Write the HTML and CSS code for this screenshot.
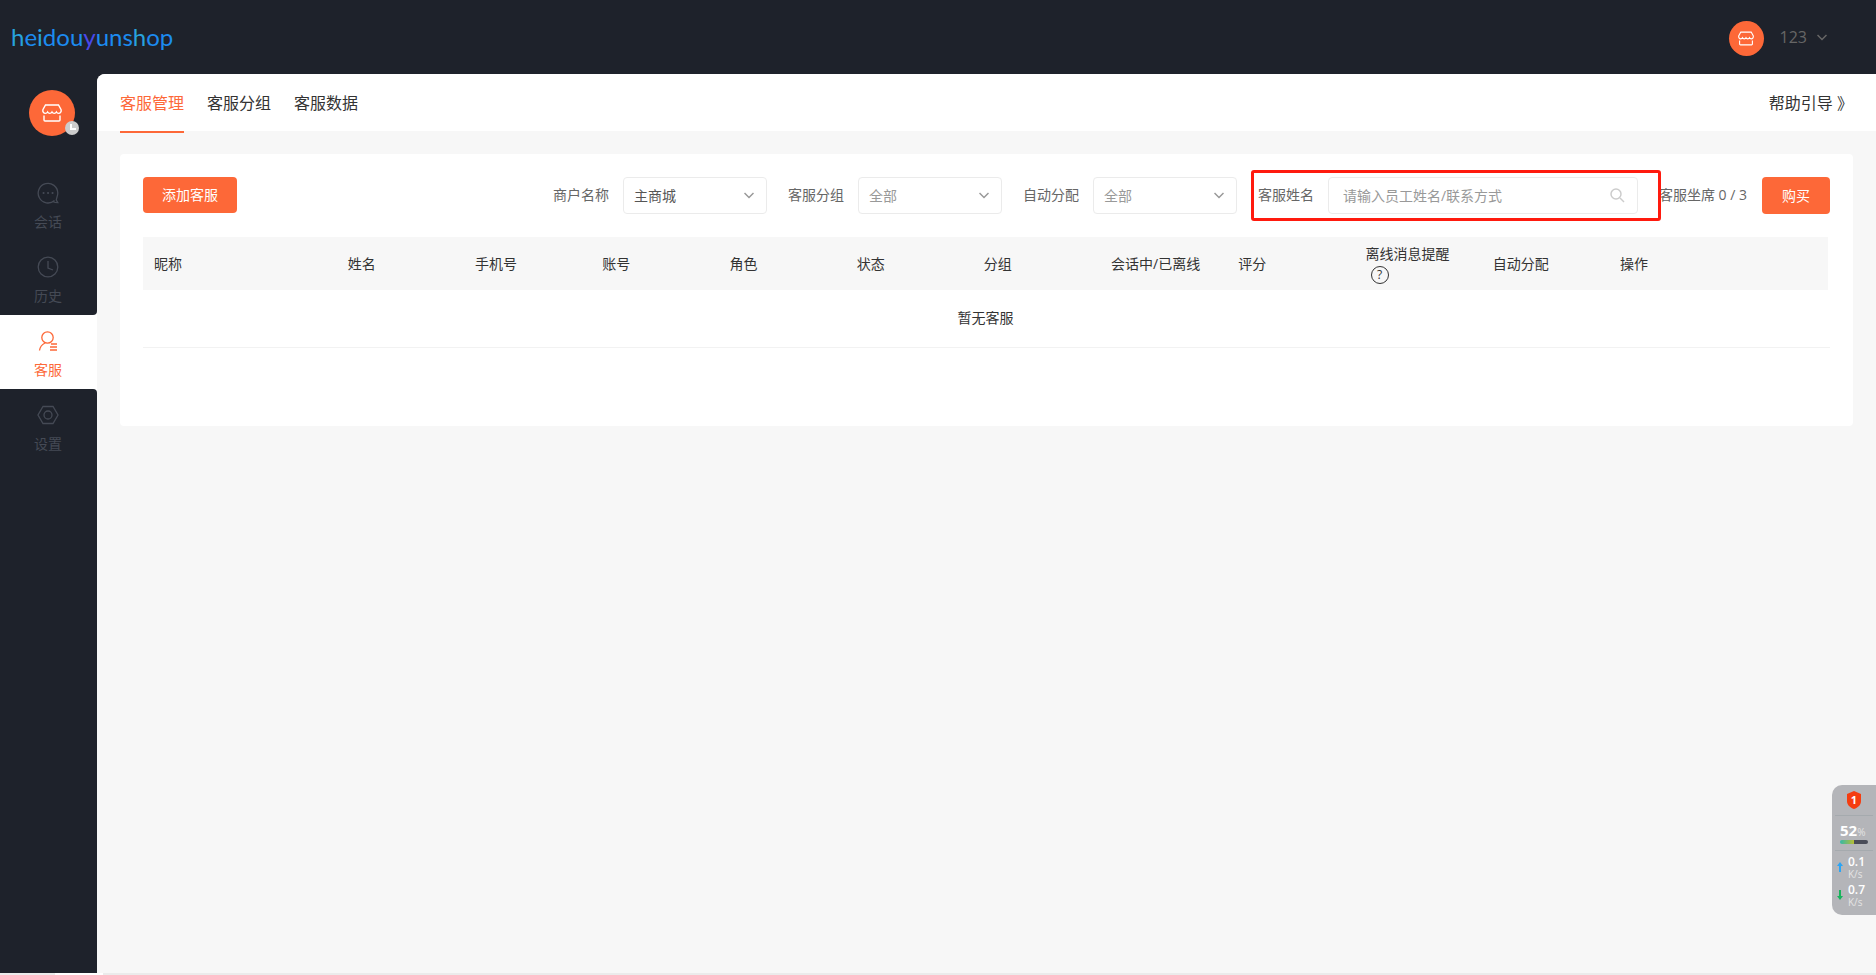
FILE: index.html
```html
<!DOCTYPE html>
<html lang="zh-CN">
<head>
    <meta charset="utf-8" />
    <title>客服管理</title>
    <meta name="viewport" content="width=device-width, initial-scale=1" />
    <link rel="stylesheet" href="styles.css">
</head>
<body>
<svg class="sprite" aria-hidden="true">
    <symbol id="shop" viewBox="0 0 20 18">
        <path d="M3.5 1h13L19 5.500c.6 2-.5 3.900-2.400 3.900-1.500 0-2.200-1.400-2.200-1.400s-.7 1.400-2.200 1.400S10 8 10 8s-.7 1.400-2.200 1.400S5.600 8 5.600 8s-.7 1.400-2.200 1.400C1.500 9.400.4 7.500 1 5.500zM2 11.500V16q0 1 1 1h14q1 0 1-1v-4.500" />
    </symbol>
    <symbol id="chevron" viewBox="0 0 10 7">
        <path d="M0.500 1l4.500 4.500L9.500 1" />
    </symbol>
</svg>

<header class="header">
    <a class="logo" href="#"><span class="c1">h</span>e<span class="c1">i</span>dou<span class="c2">y</span>uns<span class="c1">h</span>op</a>
    <button class="user" type="button">
        <span class="avatar"><svg width="16" height="15"><use href="#shop" /></svg></span>
        <span>123</span>
        <svg class="chevron" width="10" height="7"><use href="#chevron" /></svg>
    </button>
</header>

<div class="layout">
    <nav class="sidebar">
        <div class="side-top">
            <div class="store">
                <svg width="20" height="18"><use href="#shop" /></svg>
                <span class="store-status">
                    <svg width="14" height="14" viewBox="0 0 14 14"><path d="M6 3v5h5" /></svg>
                </span>
            </div>
            <a class="side-item" href="#">
                <svg width="22" height="22" viewBox="0 0 22 22">
                    <path d="M17.500 18.500A9.800 9.800 0 1 1 20.800 11c0 3-1.500 5.500-1.500 7l1.500 2.700c-1.500 0-3 0-4.500-1" />
                    <path class="dots" d="M6.500 11h.1M11 11h.1M15.500 11h.1" />
                </svg>
                会话
            </a>
            <a class="side-item" href="#">
                <svg width="22" height="22" viewBox="0 0 22 22">
                    <circle cx="11" cy="11" r="9.800" />
                    <path d="M11 5v7l5 2" />
                </svg>
                历史
            </a>
        </div>
        <a class="side-item active" href="#">
            <svg width="22" height="22" viewBox="0 0 22 22">
                <circle cx="10.500" cy="7.500" r="5.700" />
                <path d="M2.500 20.500c.5-3.500 2.500-6 5.500-7.500M14 14h6M13 17h7M13 20h7" />
            </svg>
            客服
        </a>
        <div class="side-rest">
            <a class="side-item" href="#">
                <svg width="22" height="22" viewBox="0 0 22 22">
                    <path d="M6 2.500h10l5 8.500-5 8.500H6L1 11z" />
                    <circle cx="11" cy="11" r="4" />
                </svg>
                设置
            </a>
        </div>
    </nav>

    <main class="main">
        <div class="tabs">
            <a class="tab current" href="#">客服管理</a>
            <a class="tab" href="#">客服分组</a>
            <a class="tab" href="#">客服数据</a>
            <a class="guide" href="#">帮助引导 》</a>
        </div>

        <section class="card">
            <form class="toolbar">
                <button class="btn" type="button">添加客服</button>
                <div class="filters">
                    <div class="field">
                        <label for="shop-name">商户名称</label>
                        <div class="control">
                            <select id="shop-name" class="chosen"><option>主商城</option></select>
                            <svg class="chevron" width="10" height="7"><use href="#chevron" /></svg>
                        </div>
                    </div>
                    <div class="field">
                        <label for="group">客服分组</label>
                        <div class="control">
                            <select id="group"><option>全部</option></select>
                            <svg class="chevron" width="10" height="7"><use href="#chevron" /></svg>
                        </div>
                    </div>
                    <div class="field">
                        <label for="assign">自动分配</label>
                        <div class="control">
                            <select id="assign"><option>全部</option></select>
                            <svg class="chevron" width="10" height="7"><use href="#chevron" /></svg>
                        </div>
                    </div>
                    <div class="field marked">
                        <label for="staff">客服姓名</label>
                        <div class="control search">
                            <input id="staff" type="text" placeholder="请输入员工姓名/联系方式" />
                            <svg width="15" height="15" viewBox="0 0 15 15"><circle cx="6" cy="6" r="5" /><path d="M10 10l4 4" /></svg>
                        </div>
                    </div>
                    <div class="field seats">
                        <span>客服坐席 0 / 3</span>
                        <button class="btn buy" type="button">购买</button>
                    </div>
                </div>
            </form>

            <div class="table-wrap">
                <table>
                    <thead>
                        <tr>
                            <th class="col-nick">昵称</th>
                            <th>姓名</th>
                            <th>手机号</th>
                            <th>账号</th>
                            <th>角色</th>
                            <th>状态</th>
                            <th>分组</th>
                            <th>会话中/已离线</th>
                            <th>评分</th>
                            <th>离线消息提醒 <button class="help" type="button" aria-label="说明">?</button></th>
                            <th>自动分配</th>
                            <th class="col-action">操作</th>
                        </tr>
                    </thead>
                    <tbody>
                        <tr><td colspan="12">暂无客服</td></tr>
                    </tbody>
                </table>
            </div>
        </section>
    </main>
</div>
<div class="bottom-line"></div>

<aside class="monitor">
    <svg class="shield" width="14" height="18" viewBox="0 0 14 18">
        <path d="M7 0l7 3v7c0 4-3 6.500-7 8-4-1.500-7-4-7-8V3z" />
        <text x="7" y="13" text-anchor="middle">1</text>
    </svg>
    <div class="memory">
        <div><b>52</b>%</div>
        <div class="bar"></div>
    </div>
    <div class="speed up">
        <svg width="6" height="10" viewBox="0 0 6 10"><path d="M3 0l3 4H4v6H2V4H0z" /></svg>
        <div>0.1<small>K/s</small></div>
    </div>
    <div class="speed down">
        <svg width="6" height="10" viewBox="0 0 6 10"><path d="M3 10l3-4H4V0H2v6H0z" /></svg>
        <div>0.7<small>K/s</small></div>
    </div>
</aside>
</body>
</html>
```

FILE: styles.css
```css
* { box-sizing: border-box; }
body {
    margin: 0; min-height: 100vh; display: flex; flex-direction: column;
    background: #1e222b; color: #333;
    font: 14px/20px "Open Sans", "Noto Sans CJK SC", sans-serif;
}
a { color: inherit; text-decoration: none; }
button, input, select { font: inherit; color: inherit; }
button { border: 0; padding: 0; background: none; cursor: pointer; }
svg { fill: none; stroke: currentColor; flex: none; }
.sprite { position: absolute; width: 0; height: 0; }
.chevron { color: #999; stroke-width: 1.5; }

/* header */
.header {
    height: 74px; padding: 0 49px 0 11px;
    display: flex; align-items: center; justify-content: space-between;
}
.logo { font: 24px/30px Lato, sans-serif; color: #1c8bf0; }
.logo .c1 { color: #28a3dc; }
.logo .c2 { color: #4b49ea; }
.user {
    display: flex; align-items: center; gap: 10px;
    font-size: 16px; color: #666;
}
.user .chevron { color: #666; }
.avatar {
    width: 35px; height: 35px; margin: 3px 6px 0 0; border-radius: 50%;
    display: flex; align-items: center; justify-content: center;
    background: #fd6838; color: #fff;
}
.avatar svg, .store > svg { stroke-width: 1.4; }

/* sidebar */
.layout { flex: 1; display: flex; }
.sidebar { width: 97px; display: flex; flex-direction: column; background: #fff; }
.side-top, .side-rest { background: #1e222b; color: #454a55; }
.side-top { border-bottom-right-radius: 4px; }
.side-rest { flex: 1; border-top-right-radius: 4px; }
.store {
    position: relative; width: 46px; height: 46px; margin: 16px 0 31px 29px;
    border-radius: 50%; background: #fd6838; color: #fff;
    display: flex; align-items: center; justify-content: center;
}
.store-status {
    position: absolute; right: -4px; bottom: 1px; width: 14px; height: 14px;
    border-radius: 50%; background: #ccc;
}
.store-status svg { display: block; stroke-width: 2; }
.side-item {
    height: 74px; padding: 15px 1px 0 0;
    display: flex; flex-direction: column; align-items: center; gap: 8px;
}
.side-item.active { color: #fd6838; }
.side-item svg { stroke-width: 1.3; }
.side-item .dots { stroke-width: 2; stroke-linecap: round; }

/* main area */
.main {
    flex: 1; min-width: 0; background: #f7f7f7;
    border-top-left-radius: 8px; overflow: hidden;
}
.tabs {
    height: 57px; padding: 0 23px; display: flex; gap: 23px;
    background: #fff; font-size: 16px; line-height: 58px;
}
.tab.current { height: 59px; color: #fd6838; border-bottom: 2px solid #fd6838; }
.guide { margin-left: auto; }
.card {
    margin: 23px; padding: 23px 23px 78px;
    background: #fff; border-radius: 4px;
}
.toolbar { display: flex; justify-content: space-between; margin-bottom: 23px; }
.btn {
    height: 36px; padding: 0 19px; border-radius: 4px;
    background: #fd6838; color: #fff;
}
.buy { height: 37px; padding: 0 20px; }
.filters { display: flex; gap: 21px; color: #666; }
.field { display: flex; align-items: center; gap: 14px; }
.field label, .field span { padding-bottom: 2px; }
.field.seats { gap: 15px; }
.control { display: grid; align-items: center; width: 144px; }
.control > * { grid-area: 1 / 1; }
.control svg { justify-self: end; margin-right: 13px; pointer-events: none; }
.control select, .control input {
    width: 100%; height: 37px; margin: 0; padding: 0 10px;
    border: 1px solid #ebebeb; border-radius: 4px; background: #fff;
    appearance: none; outline: none;
}
.control select { color: #999; }
.control .chosen { color: #555; }
.control.search { width: 310px; }
.control input { padding: 0 14px; }
.control input::placeholder { color: #999; }
.search svg { color: #ccc; stroke-width: 1.5; }
.marked { position: relative; }
.marked::after {
    content: ""; position: absolute; inset: -7px -23px -7px -7px; z-index: 1;
    border: 3px solid #ff1a0e; border-radius: 3px; pointer-events: none;
}

/* table */
.table-wrap { padding-right: 2px; border-bottom: 1px solid #f2f2f2; }
table { width: 100%; table-layout: fixed; border-collapse: collapse; }
th {
    height: 53px; padding: 0 11px;
    background: #f7f7f7; font-weight: normal; text-align: left;
}
.col-nick { width: 11.5%; }
.col-action { width: 13%; }
td { height: 57px; padding: 0 0 2px; text-align: center; }
.help {
    display: block; width: 18px; height: 18px; margin: 2px 0 0 5px;
    border: 1px solid #333; border-radius: 50%;
    font-size: 12px; line-height: 16px;
}

.bottom-line {
    height: 2px;
    background: linear-gradient(to right, #ebebeb 55px, #fff 55px, #fff 103px, #ebebeb 103px);
}

/* floating system monitor */
.monitor {
    position: fixed; right: 0; top: 785px; width: 44px; height: 130px;
    padding-top: 6px; border-radius: 10px 0 0 10px;
    display: flex; flex-direction: column; align-items: center;
    background: #b4b5b9; color: #fff; font-size: 12px; line-height: 14px;
}
.monitor svg { stroke: none; }
.shield { fill: #f53d10; }
.shield text { fill: #fff; font-size: 11px; font-weight: bold; }
.memory {
    width: 38px; height: 36px; margin: 6px 0 2px; padding: 6px 5px 0;
    border: solid #a5aaae; border-width: 1px 0;
    font-size: 10px; line-height: 16px; color: #e4e4e4; white-space: nowrap;
}
.memory b { font-size: 15px; color: #fff; }
.bar {
    height: 4px; border-radius: 2px;
    background: linear-gradient(to right, #35b8a8, #b8be35 50%, #4a4c58 50%);
}
.speed {
    display: flex; align-items: center; gap: 5px;
    height: 28px; padding-right: 6px; font-weight: 600;
}
.speed small { display: block; font-size: 10px; font-weight: normal; line-height: 10px; color: #e4e4e4; }
.up svg { fill: #2ba5f5; }
.down svg { fill: #17b45c; }
```
